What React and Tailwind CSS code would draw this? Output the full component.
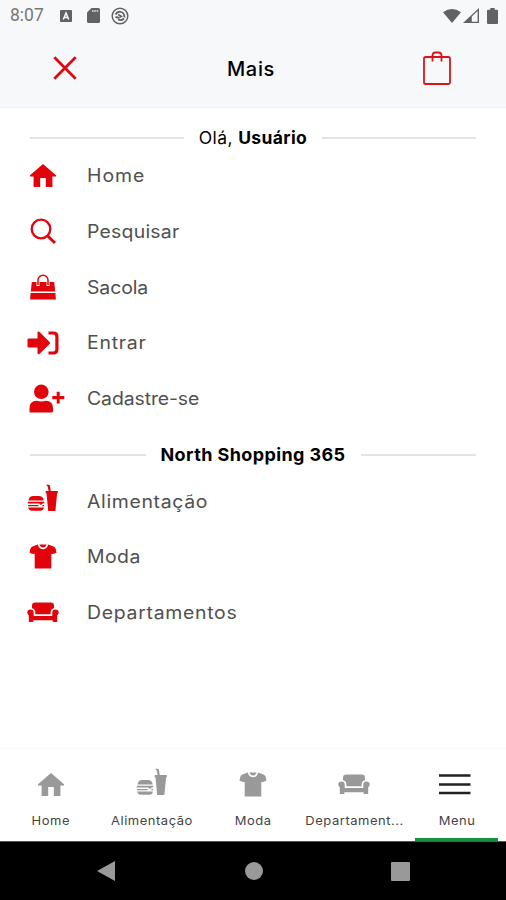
import clsx from 'clsx'

function HomeIcon() {
  return <path d="M18 4 5 15.300V16.500h3.600V27h6.600v-9h5.600v9h6.600V16.500H31V15.300Z" fill="currentColor" />
}

function SearchIcon() {
  return (
    <g fill="none" stroke="currentColor">
      <circle cx="16" cy="13" r="9.300" strokeWidth="2.300" />
      <path d="m22.700 20 7.300 7" strokeWidth="3" />
    </g>
  )
}

function BagIcon() {
  return (
    <g>
      <path d="M6.800 11h22.400l1 9.600H5.800ZM5.600 22h24.800l.5 6.400H5.100Z" fill="currentColor" />
      <path d="M13 15V9.200a5 5 0 0 1 10 0V15" fill="none" stroke="#fff" strokeWidth="3" />
      <path d="M13 14V9.200a5 5 0 0 1 10 0V14" fill="none" stroke="currentColor" strokeWidth="1.500" />
    </g>
  )
}

function LoginIcon() {
  return (
    <g>
      <path d="M3.500 11.500h9V5.600q.3-1.900 1.900-.8l10.200 10.200q1 1 0 2L14.400 27q-1.600 1-1.900-.8v-5.700h-9q-1 0-1-1v-7q0-1 1-1Z" fill="currentColor" />
      <path d="M23.500 6h5q3.400 0 3.400 3.400v13.200q0 3.400-3.400 3.400h-5" fill="none" stroke="currentColor" strokeWidth="3.200" />
    </g>
  )
}

function UserAddIcon() {
  return (
    <g fill="currentColor">
      <circle cx="16.300" cy="8.800" r="7.300" />
      <path d="M4.500 29.500v-4.200q0-7.500 7.300-7.500 4.500 1.600 9 0 7.200 0 7.200 7.500v2.700q0 1.500-1.500 1.500Z" />
      <path d="M31.700 8.800h3v4.200h4.600v3.200h-4.600v4.300h-3v-4.300h-4.400V13h4.400Z" />
    </g>
  )
}

function FoodIcon() {
  return (
    <g fill="currentColor">
      <path d="M3.500 15.400q.6-4.400 5-4.400h5.200q4.400 0 5 4.400Z" />
      <path d="M2.800 16.800h16.500v1.500l-1.600.1-1.700 1.600-1.800-1.600H2.800Z" />
      <path d="M3 20h10.500v1.200H3ZM18 20h1.200v1.200H16.500Z" />
      <path d="M3.300 22.500h15.600q-.5 3.300-3.600 3.300H6.900q-3.100 0-3.600-3.300Z" />
      <path d="m21.800-.6 2.900.5 1.100 6h7v2.400h-.7L30.400 26h-7.200L21.500 8.300h-.8V5.900h3L22.500 1l-.9-.2Z" />
    </g>
  )
}

function ShirtIcon() {
  return (
    <g fill="currentColor">
      <path d="M12.800 3.600 7.500 5.400Q5.800 6 5.200 8.200l-.7 3.500 4.400 1.600.8-.7V27.500h16.600V12.600l.8.700 4.400-1.600-.7-3.500Q30.200 6 28.500 5.400l-5.300-1.800Q22 8.300 18 8.300t-5.200-4.700Z" />
      <path d="M14.300 3.600h7.400Q20.600 6.500 18 6.500t-3.700-2.900Z" />
    </g>
  )
}

function SofaIcon() {
  return (
    <g fill="currentColor">
      <path d="M10.200 5.500h15.600q3.200 0 3.200 3.200v2.500q-3.400.8-3.400 4.800v1.200H10.400V16q0-4-3.400-4.800v-2.500Q7 5.500 10.200 5.500Z" />
      <path d="M2.300 15.500q0-3 3.200-3t3.200 3.300v3.100h18.600v-3.100q0-3.300 3.200-3.300t3.200 3q0 1.800-1.500 2.700v6.800h-4.500v-1.700H8.300V25H3.800v-6.800q-1.500-.9-1.500-2.700Z" />
    </g>
  )
}

function BurgerIcon() {
  return <path d="M2 6.500h31.500M2 15.500h31.500M2 24h31.500" stroke="currentColor" strokeWidth="2.600" />
}

function Icon({ of: Shape, className }) {
  return (
    <svg viewBox="0 0 36 32" className={clsx('w-9 h-8 shrink-0 overflow-visible', className)}>
      <Shape />
    </svg>
  )
}

const ACCOUNT_ITEMS = [
  { label: 'Home', icon: HomeIcon, text: 'tracking-[0.9px]' },
  { label: 'Pesquisar', icon: SearchIcon, text: 'tracking-[0.2px]' },
  { label: 'Sacola', icon: BagIcon, text: 'tracking-[-0.1px]' },
  { label: 'Entrar', icon: LoginIcon, text: 'tracking-[0.7px]' },
  { label: 'Cadastre-se', icon: UserAddIcon, text: 'tracking-[-0.1px]' },
]

const STORE_ITEMS = [
  { label: 'Alimentação', icon: FoodIcon, text: 'tracking-[0.6px]' },
  { label: 'Moda', icon: ShirtIcon, text: 'tracking-[0.4px]' },
  { label: 'Departamentos', icon: SofaIcon, text: 'tracking-[0.65px]' },
]

const TABS = [
  { label: 'Home', icon: HomeIcon },
  { label: 'Alimentação', icon: FoodIcon },
  { label: 'Moda', icon: ShirtIcon },
  { label: 'Departament...', icon: SofaIcon },
  { label: 'Menu', icon: BurgerIcon, active: true },
]

function StatusBar() {
  return (
    <div className="h-[31px] flex items-center text-[#626262] pl-2.5 pr-2">
      <span className="w-[50px] font-[Roboto] text-[17.500px] leading-none text-[#777]">8:07</span>
      <svg viewBox="0 0 12 12" className="w-3 h-3">
        <rect width="12" height="12" rx="1" fill="currentColor" />
        <path d="M3.300 9.500 6 3l2.700 6.500M4.400 7.500h3.200" fill="none" stroke="#f7f8fa" strokeWidth="1.500" />
      </svg>
      <svg viewBox="0 0 13 15" className="w-[13px] h-[15px] ml-[15px]">
        <path d="M4.500 0H11.500Q13 0 13 1.500v12q0 1.500-1.500 1.500h-10Q0 15 0 13.500V4.500Z" fill="currentColor" />
        <path d="M5 3h6.500" stroke="#c4c5c6" strokeWidth="1.800" strokeDasharray="1.600 .7" />
      </svg>
      <svg viewBox="0 0 18 18" className="w-[18px] h-[18px] ml-[11px]" fill="none" stroke="currentColor">
        <circle cx="9" cy="9" r="7.800" strokeWidth="1.500" />
        <path d="M4.500 7.500Q6.500 4 10 5t3.500 5.500M13 11.500Q10.500 14 7 12.500M4.500 10l4 .8" strokeWidth="1.800" />
        <path d="m7 7.500 3.500 1.800-2 1.200" strokeWidth="1.500" />
      </svg>
      <svg viewBox="0 0 18 14" className="w-[18px] h-3.5 ml-auto">
        <path d="M0 3.200Q9-3 18 3.200L9 14Z" fill="currentColor" />
      </svg>
      <svg viewBox="0 0 16 15" className="w-4 h-[15px] ml-0.5">
        <path d="M0 15 16 0v15Z" fill="currentColor" />
        <path d="M8.800 8.500 14.600 3v10.700H8.800Z" fill="#f7f8fa" />
      </svg>
      <svg viewBox="0 0 11 16" className="w-[11px] h-4 ml-2">
        <path d="M3.300 0h4.400v1.700H10q1 0 1 1V15q0 1-1 1H1q-1 0-1-1V2.700q0-1 1-1h2.300Z" fill="currentColor" />
      </svg>
    </div>
  )
}

function Header() {
  return (
    <header className="h-[76px] pb-0.5 grid grid-cols-[130px_1fr_138px] items-center justify-items-center">
      <svg viewBox="0 0 24 24" className="w-6 h-6 text-[#dc0b12]" fill="none" stroke="currentColor" strokeWidth="2.800">
        <path d="m1.300 1.300 21.400 21.400M22.700 1.300 1.300 22.700" />
      </svg>
      <h1 className="text-[20px] leading-6 font-medium text-black ml-1 mt-0.5 tracking-[0.7px]">Mais</h1>
      <svg viewBox="0 0 28 34" className="w-7 h-[34px] text-[#d9141b]" fill="none" stroke="currentColor" strokeWidth="1.800">
        <rect x="1" y="6" width="26" height="27" rx="1.500" />
        <path d="M9.500 10.500V4.500q0-3 3-3h3q3 0 3 3V10.500" />
      </svg>
    </header>
  )
}

function Divider({ children, className }) {
  return (
    <div className={clsx('flex items-center h-5 gap-[15px] px-[30px]', className)}>
      <span className="flex-1 h-0.5 bg-[#e4e4e4]" />
      <span className="leading-5 text-black whitespace-nowrap">{children}</span>
      <span className="flex-1 h-0.5 bg-[#e4e4e4]" />
    </div>
  )
}

function MenuList({ items }) {
  return (
    <ul>
      {items.map(({ label, icon, text }) => (
        <li key={label} className="h-[55.7px] flex items-center gap-[26px] pl-[25px]">
          <Icon of={icon} className="text-[#e1040a]" />
          <span className={clsx('text-[18px] leading-6 pt-px text-[#505050] origin-left scale-x-[1.08]', text)}>{label}</span>
        </li>
      ))}
    </ul>
  )
}

function TabBar() {
  return (
    <nav className="h-[94px] grid grid-cols-5 border-t border-[#fafafa] border-b border-b-[#555]">
      {TABS.map(({ label, icon, active }) => (
        <div key={label} className="relative flex flex-col items-center pt-5">
          <Icon of={icon} className={active ? 'text-[#222]' : 'text-[#999]'} />
          <span
            className={clsx(
              'mt-3 text-[12px] leading-4 text-[#444] tracking-[0.5px] whitespace-nowrap scale-x-[1.08]',
              active && 'ml-[3px]'
            )}
          >
            {label}
          </span>
          {active && <span className="absolute bottom-0 left-[10px] w-[83px] h-[3px] bg-[#119141]" />}
        </div>
      ))}
    </nav>
  )
}

function SystemNav() {
  return (
    <div className="h-[58px] bg-black grid grid-cols-[1fr_18px_1fr] items-center pl-[97px] pr-24 text-[#999]">
      <svg viewBox="0 0 18 20" className="w-[18px] h-5"><path d="M18 0v20L0 10Z" fill="currentColor" /></svg>
      <span className="w-[18px] h-[18px] rounded-full bg-[#999]" />
      <span className="w-[19px] h-[19px] rounded-[1px] bg-[#999] justify-self-end" />
    </div>
  )
}

export default function App() {
  return (
    <div className="w-[506px] h-[900px] flex flex-col bg-white overflow-hidden font-[Inter,sans-serif]">
      <div className="bg-[#f7f8fa] border-b border-[#f0f0f1]">
        <StatusBar />
        <Header />
      </div>
      <main className="flex-1">
        <Divider className="mt-5 text-[17.500px] tracking-[0.38px]">
          Olá, <b className="font-bold">Usuário</b>
        </Divider>
        <MenuList items={ACCOUNT_ITEMS} />
        <Divider className="mt-[19px] mb-2 text-[18px] font-bold tracking-[0.4px]">North Shopping 365</Divider>
        <MenuList items={STORE_ITEMS} />
      </main>
      <TabBar />
      <SystemNav />
    </div>
  )
}
